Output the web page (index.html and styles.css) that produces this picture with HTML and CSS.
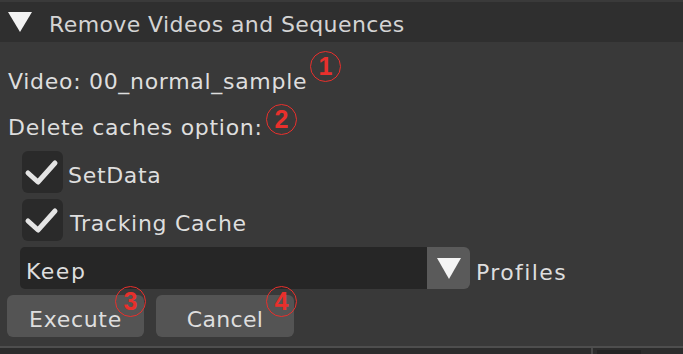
FILE: index.html
```html
<!DOCTYPE html>
<html>
<head>
<meta charset="utf-8" />
<title>Remove Videos and Sequences</title>
<link rel="stylesheet" href="styles.css">
</head>
<body>
<div class="panel">
    <div class="head">
        <span class="tri"></span>
        <span class="head-title">Remove Videos and Sequences</span>
    </div>
    <div class="content">
        <div class="line line-video">
            <span class="mark-wrap">Video: 00_normal_sample<span class="mark mark-1">1</span></span>
        </div>
        <div class="line line-del">
            <span class="mark-wrap">Delete caches option:<span class="mark mark-2">2</span></span>
        </div>
        <div class="row check-row">
            <span class="box">
                <svg width="40" height="42" viewBox="0 0 40 42"><polyline points="6,22 16,31 33,12" fill="none" stroke="#e4e4e4" stroke-width="5" stroke-linecap="round" stroke-linejoin="round"/></svg>
            </span>
            <span class="check-label">SetData</span>
        </div>
        <div class="row check-row">
            <span class="box">
                <svg width="40" height="42" viewBox="0 0 40 42"><polyline points="6,22 16,31 33,12" fill="none" stroke="#e4e4e4" stroke-width="5" stroke-linecap="round" stroke-linejoin="round"/></svg>
            </span>
            <span class="check-label label-2">Tracking Cache</span>
        </div>
        <div class="row select-row">
            <div class="select">Keep</div>
            <div class="select-btn"><span class="tri tri-small"></span></div>
            <span class="select-label">Profiles</span>
        </div>
        <div class="row btn-row">
            <div class="btn">Execute<span class="mark mark-3">3</span></div>
            <div class="btn btn-cancel">Cancel<span class="mark mark-4">4</span></div>
        </div>
    </div>
    <div class="foot">
        <div class="foot-sep"></div>
        <div class="foot-tab"></div>
    </div>
</div>
</body>
</html>
```

FILE: styles.css
```css
*{ padding:0; margin:0; box-sizing:border-box; }
body{
    width:683px;
    height:354px;
    overflow:hidden;
    background-color:#393939;
    font-family:"DejaVu Sans", sans-serif;
    color:#dedede;
}
.panel{
    height:354px;
    display:flex;
    flex-direction:column;
}
.head{
    height:42px;
    background:#2f2f2f;
    border-top:2px solid #3a3a3a;
    display:flex;
    align-items:center;
    padding-left:8px;
}
.tri{
    width:0;
    height:0;
    border-left:12px solid transparent;
    border-right:12px solid transparent;
    border-top:20px solid #f2f2f2;
}
.head-title{
    margin-left:17px;
    margin-top:4px;
    font-size:22px;
    letter-spacing:0.4px;
    color:#d4d4d4;
}
.content{
    flex:1;
    padding-left:8px;
    font-size:22px;
    letter-spacing:0.7px;
}
.line{
    display:flex;
    align-items:center;
}
.line-video{ height:50px; margin-top:14px; }
.line-del{ height:45px; padding-bottom:3px; }
.mark-wrap{ position:relative; }
.mark{
    position:absolute;
    width:31px;
    height:31px;
    border:1.5px solid #e8302c;
    border-radius:50%;
    color:#e8302c;
    font-family:"Liberation Sans", sans-serif;
    font-weight:bold;
    font-size:25px;
    letter-spacing:0;
    line-height:29px;
    text-align:center;
}
.mark-1{ left:302px; top:-18px; }
.mark-2{ left:258px; top:-11px; }
.mark-3{ left:108px; top:-9px; }
.mark-4{ left:110px; top:-9px; }
.row{
    display:flex;
    align-items:center;
    height:42px;
    margin-bottom:6px;
}
.check-row{ padding-left:14px; }
.box{
    width:41px;
    height:42px;
    background:#2a2a2a;
    border-radius:6px;
}
.box svg{ display:block; }
.check-label{ margin-left:5px; padding-top:7px; }
.label-2{ margin-left:7px; }
.select-row{ padding-left:12px; }
.select{
    width:407px;
    height:42px;
    background:#262626;
    border-radius:5px 0 0 5px;
    padding-left:6px;
    line-height:50px;
    letter-spacing:1.5px;
}
.select-btn{
    width:43px;
    height:42px;
    background:#5a5a5a;
    border-radius:0 6px 6px 0;
    display:flex;
    align-items:center;
    justify-content:center;
}
.tri-small{
    border-left:12px solid transparent;
    border-right:12px solid transparent;
    border-top:21px solid #f4f4f4;
}
.select-label{ margin-left:6px; padding-top:8px; letter-spacing:1.4px; }
.btn-row{ margin-left:-1px; }
.btn{
    position:relative;
    width:137px;
    height:42px;
    background:#545454;
    border-radius:6px;
    text-align:center;
    line-height:50px;
}
.btn-cancel{ margin-left:12px; width:138px; letter-spacing:0.3px; }
.foot{
    height:8px;
    border-top:2px solid #4e4e4e;
    background:#2c2c2c;
    display:flex;
    padding-left:591px;
}
.foot-sep{
    width:2px;
    background:#4a4a4a;
}
.foot-tab{
    width:44px;
    margin-left:4px;
    margin-top:2px;
    background:#232323;
}
```
